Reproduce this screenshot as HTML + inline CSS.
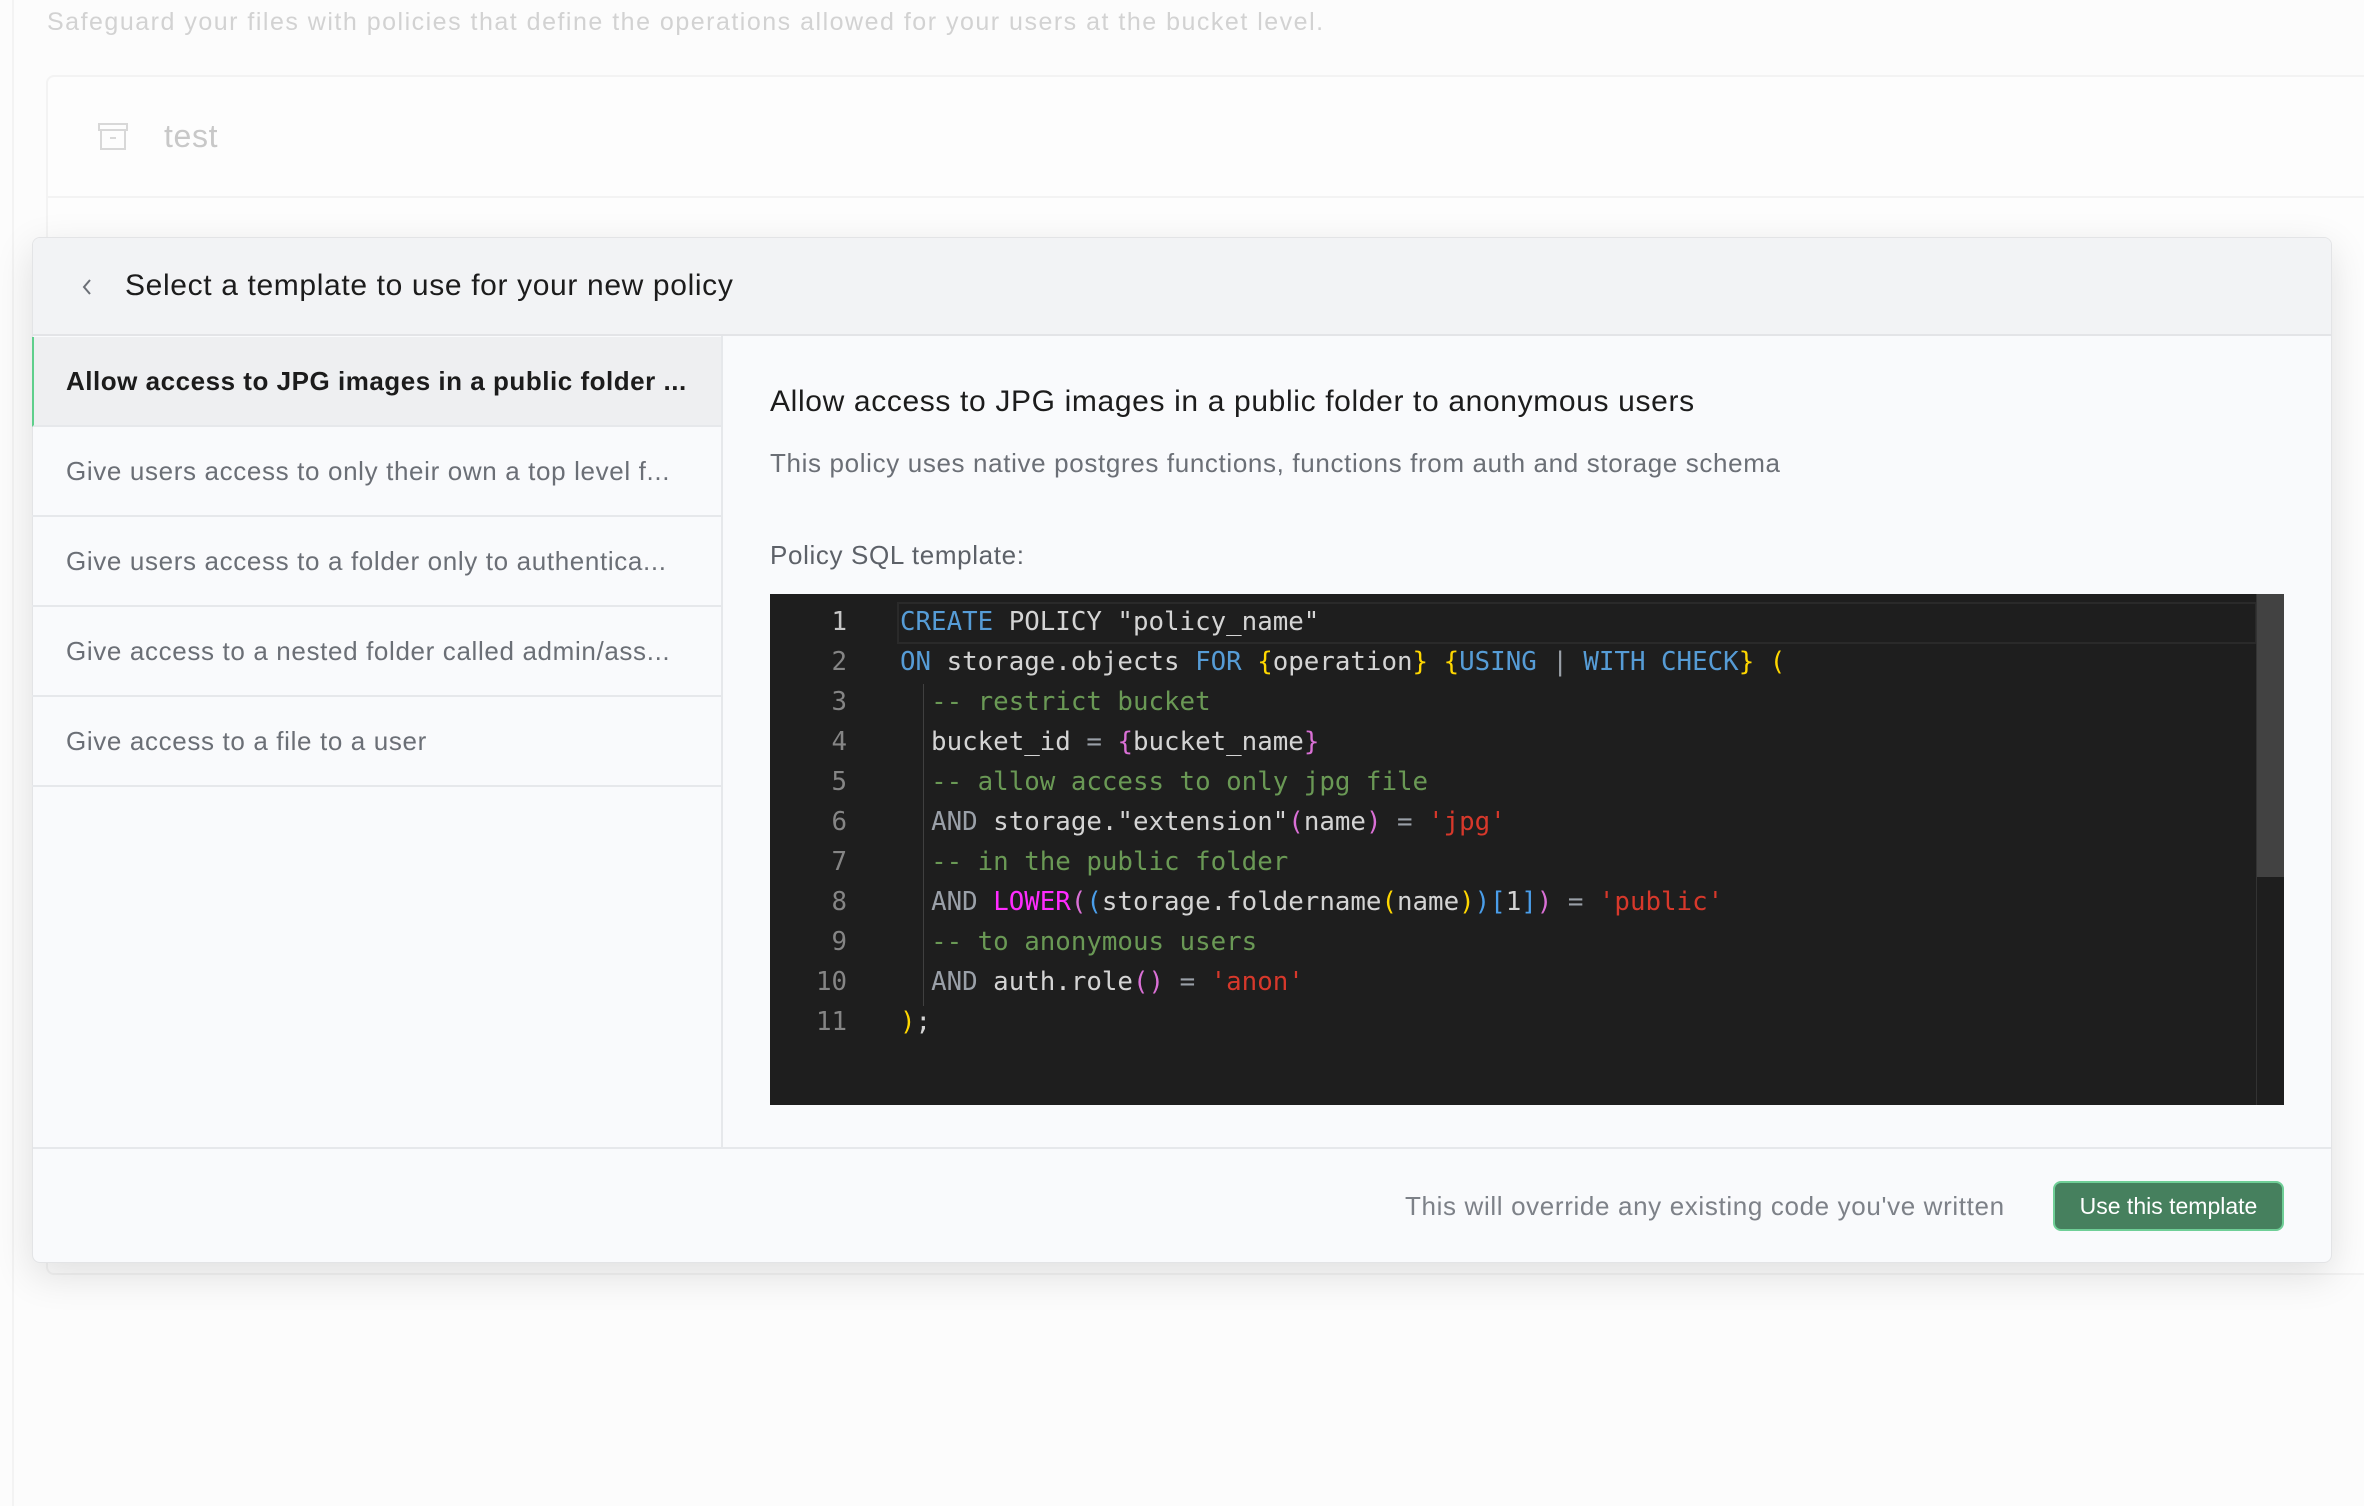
<!DOCTYPE html>
<html><head><meta charset="utf-8"><style>
*{margin:0;padding:0;box-sizing:border-box}
body{width:2364px;height:1506px;background:#fcfcfc;font-family:"Liberation Sans",sans-serif;position:relative;overflow:hidden;letter-spacing:0.04em}
.a{position:absolute;white-space:nowrap}
.code{font-family:"DejaVu Sans Mono","Liberation Mono",monospace;font-size:25.8px;color:#d4d4d4;letter-spacing:0}
.ln{position:absolute;left:770px;width:77px;text-align:right;color:#858585}
.cl{position:absolute;left:900px;white-space:pre}
.k{color:#569cd6}.c{color:#6a9955}.s{color:#d7382b}.y{color:#ffd700}.p{color:#da70d6}.m{color:#ff2bff}.g{color:#9aa0a8}.b{color:#4a9eea}
.row{position:absolute;left:32px;width:689px;height:90px;border-bottom:2px solid #e6e8eb;font-size:26px;color:#6b6f76;padding-left:34px;line-height:88px}
</style></head><body>
<div class="a" style="left:12px;top:0;width:2px;height:1506px;background:#f3f3f3"></div>
<div class="a" style="left:47px;top:8px;font-size:25px;color:#d2d2d2;letter-spacing:1.5px">Safeguard your files with policies that define the operations allowed for your users at the bucket level.</div>
<div class="a" style="left:46px;top:75px;width:2330px;height:1200px;border:2px solid #f3f3f3;border-radius:8px;background:#fdfdfd"></div>
<div class="a" style="left:46px;top:196px;width:2330px;height:2px;background:#f3f3f3"></div>
<div class="a" style="left:98px;top:123px;width:30px;height:8px;border:2px solid #d8d8d8"></div>
<div class="a" style="left:100px;top:131px;width:26px;height:19px;border:2px solid #d8d8d8;border-top:none"></div>
<div class="a" style="left:110px;top:137px;width:6px;height:2px;background:#d8d8d8"></div>
<div class="a" style="left:164px;top:118px;font-size:32px;color:#c8c8c8">test</div>

<div class="a" style="left:32px;top:237px;width:2300px;height:1026px;background:#f9fafc;border:1px solid #e3e4e6;border-radius:8px;box-shadow:0 12px 40px rgba(0,0,0,0.12);overflow:hidden">
  <div class="a" style="left:0;top:0;width:2300px;height:98px;background:#f2f3f5;border-bottom:2px solid #e3e4e7"></div>
  <svg class="a" style="left:46px;top:38px" width="16" height="22" viewBox="0 0 16 22"><path d="M11 4 L5 11 L11 18" fill="none" stroke="#6b6f76" stroke-width="2"/></svg>
  <div class="a" style="left:92px;top:31px;font-size:30px;color:#1c1c1c">Select a template to use for your new policy</div>
  <div class="a" style="left:688px;top:98px;width:2px;height:811px;background:#e6e8eb"></div>
  <div class="a" style="left:0;top:909px;width:2300px;height:2px;background:#e6e8eb"></div>
</div>
<div class="row" style="top:337px;height:90px;background:#eeeff1;border-left:2px solid #5fcf8c;color:#1c1c1c;font-weight:bold;padding-left:32px;letter-spacing:0.02em">Allow access to JPG images in a public folder ...</div>
<div class="row" style="top:427px">Give users access to only their own a top level f...</div>
<div class="row" style="top:517px">Give users access to a folder only to authentica...</div>
<div class="row" style="top:607px">Give access to a nested folder called admin/ass...</div>
<div class="row" style="top:697px">Give access to a file to a user</div>

<div class="a" style="left:770px;top:385px;font-size:30px;color:#1c1c1c">Allow access to JPG images in a public folder to anonymous users</div>
<div class="a" style="left:770px;top:448px;font-size:26px;color:#6b6f76">This policy uses native postgres functions, functions from auth and storage schema</div>
<div class="a" style="left:770px;top:540px;font-size:26px;color:#5d6168">Policy SQL template:</div>

<div class="a" style="left:770px;top:594px;width:1514px;height:511px;background:#1e1e1e"></div>
<div class="a" style="left:897px;top:602px;width:1360px;height:42px;border:2px solid #2a2a2a"></div>
<div class="a" style="left:2257px;top:594px;width:27px;height:283px;background:#424242"></div>
<div class="a" style="left:2256px;top:594px;width:1px;height:511px;background:#333"></div>
<div class="a" style="left:923px;top:684px;width:1px;height:322px;background:#404040"></div>
<div class="code">
<div class="ln" style="top:607px;color:#c6c6c6">1</div>
<div class="ln" style="top:647px">2</div><div class="ln" style="top:687px">3</div><div class="ln" style="top:727px">4</div><div class="ln" style="top:767px">5</div><div class="ln" style="top:807px">6</div><div class="ln" style="top:847px">7</div><div class="ln" style="top:887px">8</div><div class="ln" style="top:927px">9</div><div class="ln" style="top:967px">10</div><div class="ln" style="top:1007px">11</div>
<div class="cl" style="top:607px"><span class="k">CREATE</span> POLICY "policy_name"</div>
<div class="cl" style="top:647px"><span class="k">ON</span> storage.objects <span class="k">FOR</span> <span class="y">{</span>operation<span class="y">}</span> <span class="y">{</span><span class="k">USING</span> <span class="g">|</span> <span class="k">WITH CHECK</span><span class="y">}</span> <span class="y">(</span></div>
<div class="cl" style="top:687px">  <span class="c">-- restrict bucket</span></div>
<div class="cl" style="top:727px">  bucket_id <span class="g">=</span> <span class="p">{</span>bucket_name<span class="p">}</span></div>
<div class="cl" style="top:767px">  <span class="c">-- allow access to only jpg file</span></div>
<div class="cl" style="top:807px">  <span class="g">AND</span> storage."extension"<span class="p">(</span>name<span class="p">)</span> <span class="g">=</span> <span class="s">'jpg'</span></div>
<div class="cl" style="top:847px">  <span class="c">-- in the public folder</span></div>
<div class="cl" style="top:887px">  <span class="g">AND</span> <span class="m">LOWER</span><span class="p">(</span><span class="b">(</span>storage.foldername<span class="y">(</span>name<span class="y">)</span><span class="b">)[</span>1<span class="b">]</span><span class="p">)</span> <span class="g">=</span> <span class="s">'public'</span></div>
<div class="cl" style="top:927px">  <span class="c">-- to anonymous users</span></div>
<div class="cl" style="top:967px">  <span class="g">AND</span> auth.role<span class="p">()</span> <span class="g">=</span> <span class="s">'anon'</span></div>
<div class="cl" style="top:1007px"><span class="y">)</span>;</div>
</div>

<div class="a" style="left:1405px;top:1191px;font-size:26px;color:#7d8188">This will override any existing code you've written</div>
<div class="a" style="left:2053px;top:1181px;width:231px;height:50px;background:#46805e;border:2px solid #6fcf97;border-radius:8px;color:#fff;font-size:23px;text-align:center;line-height:46px;letter-spacing:0">Use this template</div>
</body></html>
